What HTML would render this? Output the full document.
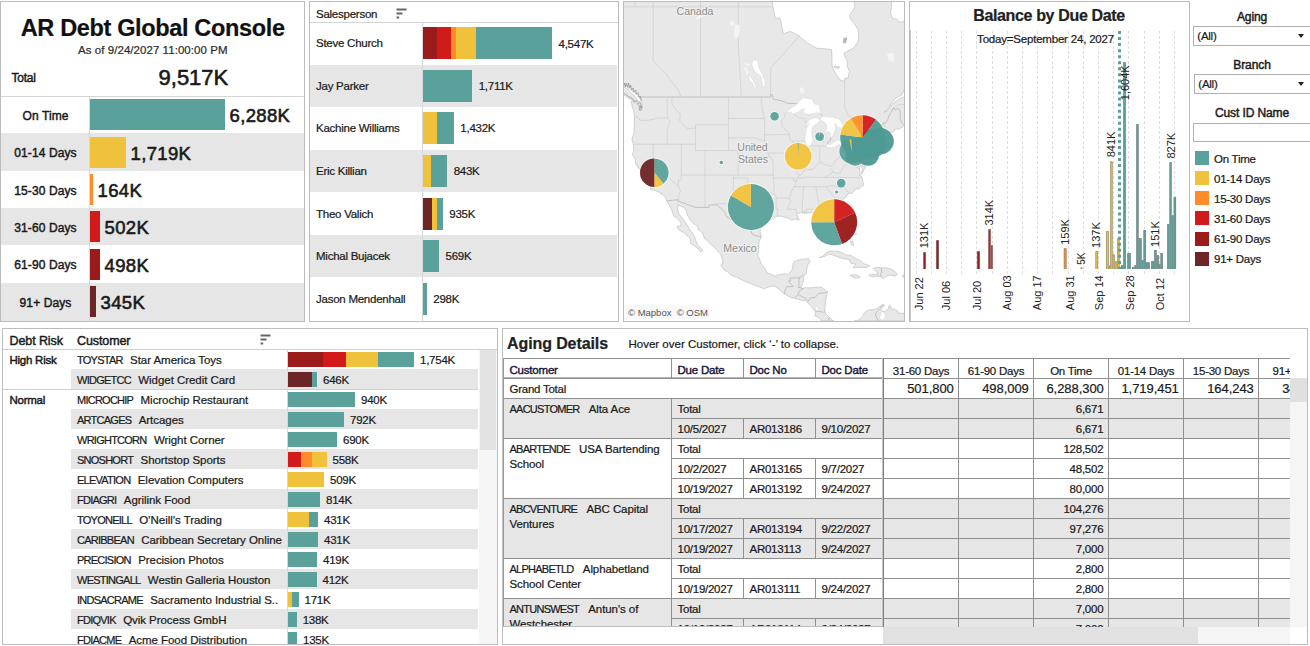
<!DOCTYPE html>
<html><head><meta charset="utf-8"><title>AR Debt Global Console</title>
<style>
html,body{margin:0;padding:0;background:#fff;}
body{width:1310px;height:646px;overflow:hidden;position:relative;font-family:"Liberation Sans",sans-serif;color:#1a1a1a;font-size:11.5px;}
.abs,.p,.t,.b,.ln{position:absolute;}
.p{box-sizing:border-box;border:1px solid #bcbcbc;background:#fff;overflow:hidden;}
.t{white-space:nowrap;line-height:1;letter-spacing:-0.25px;-webkit-text-stroke:0.22px #1a1a1a;}
.m{-webkit-text-stroke:0.45px #1a1a1a;}
.m2{-webkit-text-stroke:0.6px #1a1a1a;}
.id{letter-spacing:-0.75px;font-size:11px;}
.g{background:#e6e6e6;position:absolute;}
.b{height:31.5px;}
svg{position:absolute;left:0;top:0;overflow:hidden;}
</style></head><body>

<div class="p" style="left:0px;top:1px;width:305px;height:321px"></div>
<div class="t " style="left:152.7px;width:0;display:flex;justify-content:center;top:16.8px;font-size:23.5px;font-weight:bold;letter-spacing:-0.35px;color:#111;"><span>AR Debt Global Console</span></div>
<div class="t " style="left:152.8px;width:0;display:flex;justify-content:center;top:44.8px;font-size:11.5px;letter-spacing:0.05px;color:#333;"><span>As of 9/24/2027 11:00:00 PM</span></div>
<div class="t m" style="left:11.5px;top:72.0px;font-size:12px;">Total</div>
<div class="t m2" style="left:193.4px;width:0;display:flex;justify-content:center;top:66.5px;font-size:22px;letter-spacing:0;"><span>9,517K</span></div>
<div class="ln" style="left:1px;top:96px;width:303px;height:1px;background:#d4d4d4"></div>
<div class="t m" style="left:45.5px;width:0;display:flex;justify-content:center;top:110.0px;font-size:12px;letter-spacing:0.1px;"><span>On Time</span></div>
<div class="b" style="left:90px;top:99.0px;width:135.0px;height:31px;background:#5ba19b"></div>
<div class="t m2" style="left:229.5px;top:107.0px;font-size:18.5px;letter-spacing:0.35px;">6,288K</div>
<div class="g" style="left:1px;top:133.0px;width:303px;height:38.0px"></div>
<div class="t m" style="left:45.5px;width:0;display:flex;justify-content:center;top:147.0px;font-size:12px;letter-spacing:0.1px;"><span>01-14 Days</span></div>
<div class="b" style="left:90px;top:137.0px;width:36.0px;height:31px;background:#f0c23b"></div>
<div class="t m2" style="left:130.5px;top:145.1px;font-size:18.5px;letter-spacing:0.35px;">1,719K</div>
<div class="t m" style="left:45.5px;width:0;display:flex;justify-content:center;top:184.5px;font-size:12px;letter-spacing:0.1px;"><span>15-30 Days</span></div>
<div class="b" style="left:90px;top:174.0px;width:3.0px;height:31px;background:#ff8c28"></div>
<div class="t m2" style="left:97.5px;top:182.1px;font-size:18.5px;letter-spacing:0.35px;">164K</div>
<div class="g" style="left:1px;top:208.0px;width:303px;height:37.0px"></div>
<div class="t m" style="left:45.5px;width:0;display:flex;justify-content:center;top:221.5px;font-size:12px;letter-spacing:0.1px;"><span>31-60 Days</span></div>
<div class="b" style="left:90px;top:211.0px;width:10.0px;height:31px;background:#d21a1a"></div>
<div class="t m2" style="left:104.5px;top:219.1px;font-size:18.5px;letter-spacing:0.35px;">502K</div>
<div class="t m" style="left:45.5px;width:0;display:flex;justify-content:center;top:258.8px;font-size:12px;letter-spacing:0.1px;"><span>61-90 Days</span></div>
<div class="b" style="left:90px;top:249.0px;width:10.0px;height:31px;background:#9b1a1a"></div>
<div class="t m2" style="left:104.5px;top:257.1px;font-size:18.5px;letter-spacing:0.35px;">498K</div>
<div class="g" style="left:1px;top:282.5px;width:303px;height:38.5px"></div>
<div class="t m" style="left:45.5px;width:0;display:flex;justify-content:center;top:296.8px;font-size:12px;letter-spacing:0.1px;"><span>91+ Days</span></div>
<div class="b" style="left:90px;top:286.0px;width:6.0px;height:31px;background:#6e2528"></div>
<div class="t m2" style="left:100.5px;top:294.1px;font-size:18.5px;letter-spacing:0.35px;">345K</div>
<div class="ln" style="left:89px;top:97px;width:1px;height:224px;background:#d8d8d8"></div>
<div class="p" style="left:309px;top:1px;width:310px;height:321px"></div>
<div class="t " style="left:316.0px;top:9.2px;font-size:11.5px;">Salesperson</div>
<svg style="left:396px;top:8px" width="12" height="12"><path d="M0.5 1.5H10.5M0.5 5.5H6.5M0.5 9.5H3.2" stroke="#666" stroke-width="2" fill="none"/></svg>
<div class="ln" style="left:310px;top:22px;width:308px;height:1px;background:#d4d4d4"></div>
<div class="t " style="left:316.0px;top:38.1px;font-size:11.5px;">Steve Church</div>
<div class="b" style="left:423.0px;top:27.0px;width:14.0px;background:#9b1a1a"></div>
<div class="b" style="left:437.0px;top:27.0px;width:14.0px;background:#d21a1a"></div>
<div class="b" style="left:451.0px;top:27.0px;width:5.0px;background:#ff8c28"></div>
<div class="b" style="left:456.0px;top:27.0px;width:20.3px;background:#f0c23b"></div>
<div class="b" style="left:476.3px;top:27.0px;width:75.7px;background:#5ba19b"></div>
<div class="t " style="left:558.5px;top:38.5px;font-size:11.5px;">4,547K</div>
<div class="g" style="left:310px;top:65.0px;width:307px;height:42.3px"></div>
<div class="t " style="left:316.0px;top:80.8px;font-size:11.5px;">Jay Parker</div>
<div class="b" style="left:423.0px;top:70.2px;width:49.2px;background:#5ba19b"></div>
<div class="t " style="left:478.7px;top:81.2px;font-size:11.5px;">1,711K</div>
<div class="t " style="left:316.0px;top:123.3px;font-size:11.5px;">Kachine Williams</div>
<div class="b" style="left:423.0px;top:112.0px;width:14.0px;background:#f0c23b"></div>
<div class="b" style="left:437.0px;top:112.0px;width:16.8px;background:#5ba19b"></div>
<div class="t " style="left:460.3px;top:122.9px;font-size:11.5px;">1,432K</div>
<div class="g" style="left:310px;top:149.7px;width:307px;height:42.3px"></div>
<div class="t " style="left:316.0px;top:166.0px;font-size:11.5px;">Eric Killian</div>
<div class="b" style="left:423.0px;top:155.3px;width:7.8px;background:#f0c23b"></div>
<div class="b" style="left:430.8px;top:155.3px;width:16.4px;background:#5ba19b"></div>
<div class="t " style="left:453.7px;top:165.9px;font-size:11.5px;">843K</div>
<div class="t " style="left:316.0px;top:208.6px;font-size:11.5px;">Theo Valich</div>
<div class="b" style="left:423.0px;top:198.3px;width:9.0px;background:#6e2528"></div>
<div class="b" style="left:432.0px;top:198.3px;width:0.3px;background:#9b1a1a"></div>
<div class="b" style="left:432.3px;top:198.3px;width:4.7px;background:#f0c23b"></div>
<div class="b" style="left:437.0px;top:198.3px;width:5.8px;background:#5ba19b"></div>
<div class="t " style="left:449.3px;top:208.8px;font-size:11.5px;">935K</div>
<div class="g" style="left:310px;top:234.6px;width:307px;height:42.4px"></div>
<div class="t " style="left:316.0px;top:251.1px;font-size:11.5px;">Michal Bujacek</div>
<div class="b" style="left:423.0px;top:240.3px;width:16.0px;background:#5ba19b"></div>
<div class="t " style="left:445.5px;top:250.8px;font-size:11.5px;">569K</div>
<div class="t " style="left:316.0px;top:293.8px;font-size:11.5px;">Jason Mendenhall</div>
<div class="b" style="left:423.0px;top:283.2px;width:3.8px;background:#5ba19b"></div>
<div class="t " style="left:433.3px;top:294.2px;font-size:11.5px;">298K</div>
<div class="ln" style="left:422px;top:23px;width:1px;height:298px;background:#d8d8d8"></div>
<div class="p" style="left:623px;top:1px;width:282px;height:321px;background:#fff">
<svg width="280" height="319" viewBox="624 2 280 319" style="left:0;top:0">
<path d="M620.1 -2.9L772.4 -2.9L772.9 6.7L774.3 13.3L775.2 17.9L780.0 18.3L781.9 26.0L783.3 33.9L790.4 31.3L797.5 34.8L806.5 42.5L816.9 48.3L824.4 48.7L831.5 49.6L832.0 57.3L832.0 65.3L832.9 68.5L835.3 73.1L838.1 77.0L840.0 80.0L843.8 81.5L845.7 77.7L848.1 78.5L848.5 74.7L849.5 71.6L847.6 66.9L847.1 60.6L844.8 56.5L843.8 53.3L849.5 50.0L853.3 48.3L856.6 44.1L858.5 39.9L858.7 34.8L858.0 29.5L854.7 24.2L850.9 19.7L849.5 16.0L852.8 10.5L854.7 6.7L853.3 -2.9L891.6 -2.9L891.6 6.7L890.6 13.3L892.1 17.9L897.3 19.7L899.2 22.4L903.9 21.5L906.7 18.8L908.6 17.9L908.6 88.2L904.4 89.7L902.9 92.6L902.0 94.8L898.2 96.6L894.4 99.7L891.1 103.6L888.8 107.3L885.9 110.8L884.0 112.2L886.9 111.3L889.7 107.7L891.8 104.5L896.3 100.9L901.1 98.1L903.9 97.0L908.6 95.9L908.6 124.1L903.9 124.1L903.9 125.8L902.0 127.4L898.2 129.1L895.4 129.1L894.0 131.4L890.6 132.7L888.8 133.7L887.3 136.0L886.2 137.6L885.9 139.2L886.9 140.2L885.4 141.1L885.0 142.4L886.4 143.1L886.6 144.6L887.3 145.6L889.7 145.6L889.2 144.0L888.5 144.0L889.9 146.2L886.9 147.2L886.6 146.2L884.5 147.5L883.1 146.2L882.6 148.3L879.8 148.8L875.5 149.4L872.4 150.8L873.6 151.1L877.4 150.8L878.8 149.7L880.9 150.2L877.9 151.8L874.1 153.0L871.0 153.3L870.5 152.8L870.1 153.8L870.8 154.1L870.8 156.2L870.3 158.4L868.9 160.9L866.5 163.3L866.0 161.8L863.7 160.2L863.4 162.4L864.6 163.6L865.7 164.2L865.7 166.9L864.2 169.6L861.6 174.1L861.6 172.0L862.7 169.3L861.3 167.2L860.1 163.6L860.8 160.6L859.2 161.8L859.0 165.4L859.4 167.8L859.9 171.4L859.9 175.0L861.5 175.9L862.5 179.7L863.7 185.3L861.3 186.7L858.7 189.0L855.6 189.0L852.1 193.3L849.0 193.3L847.6 194.1L846.2 197.0L842.9 199.5L840.0 202.0L838.1 203.7L836.7 206.5L835.8 209.3L835.8 212.8L836.5 215.8L837.7 219.1L839.8 223.2L841.0 227.7L842.3 232.0L841.9 237.2L840.5 240.4L837.2 240.6L834.6 237.0L833.9 235.7L832.9 233.6L831.0 230.9L829.4 226.6L829.6 223.4L829.4 220.7L828.2 219.4L826.3 216.9L823.5 214.2L821.6 215.0L817.1 216.5L815.4 214.2L812.1 212.7L808.3 212.9L804.6 213.5L804.6 211.2L803.9 212.8L800.3 212.6L797.0 213.7L796.0 214.5L797.9 215.8L797.5 218.3L799.4 219.4L797.9 220.5L795.6 218.8L794.2 219.6L791.3 219.9L789.0 218.6L786.6 217.5L784.2 217.2L780.0 216.0L776.9 216.4L772.9 218.3L772.4 218.6L770.5 220.5L764.8 223.4L762.0 226.1L760.3 229.3L760.1 232.0L761.3 236.5L759.2 241.4L758.4 246.6L758.4 251.8L758.0 255.6L760.1 260.5L761.0 263.5L764.4 267.5L766.2 271.1L767.7 273.1L771.5 274.3L774.3 276.3L778.5 274.9L782.6 274.1L785.6 273.7L788.0 274.8L790.4 272.1L791.8 270.1L792.7 267.8L793.0 264.0L793.7 262.0L796.5 260.5L801.7 259.2L804.6 258.9L808.8 258.9L810.2 261.5L807.4 265.5L806.9 269.6L806.0 274.1L804.6 274.6L803.6 277.0L803.6 279.5L803.1 282.5L801.7 285.5L800.3 287.4L801.7 288.2L803.6 288.4L805.0 287.6L807.9 287.8L810.2 287.9L814.0 287.2L818.8 287.0L822.1 287.7L825.4 290.4L827.5 291.8L826.3 296.7L825.6 301.6L824.9 306.4L824.9 311.7L826.3 314.2L828.2 316.1L830.1 318.0L832.0 319.9L833.9 320.9L821.1 320.9L820.2 318.0L818.3 317.8L817.3 316.6L815.0 316.1L815.4 311.7L811.2 306.4L806.9 302.1L807.4 300.1L804.6 300.9L797.5 299.2L790.4 297.2L784.7 294.3L778.5 288.9L774.8 286.2L770.5 286.2L764.4 288.7L761.5 287.7L754.9 285.5L748.3 282.7L743.1 280.5L737.4 277.5L731.2 275.3L727.5 271.8L724.1 270.1L720.8 265.0L722.7 263.8L722.7 259.5L720.8 254.4L717.5 250.8L713.7 246.6L710.4 244.0L707.1 240.4L704.3 238.3L703.3 234.6L701.0 231.4L698.1 229.3L697.7 226.1L693.9 224.0L690.6 220.7L688.2 216.4L686.3 210.9L684.9 207.9L681.6 206.5L677.8 204.8L677.8 209.3L678.7 213.7L683.5 219.6L686.8 224.5L689.6 229.3L691.5 232.0L694.4 236.2L696.2 241.4L697.7 245.1L702.9 250.2L701.0 252.3L699.1 249.7L693.4 245.1L690.6 243.5L690.1 238.8L686.8 235.1L683.5 232.5L679.7 230.4L676.9 226.6L681.1 225.6L680.6 222.3L677.3 218.6L673.5 215.8L672.1 210.9L669.3 205.4L666.9 200.9L666.0 198.1L663.1 194.7L660.8 193.9L660.3 192.4L657.0 191.6L654.6 190.1L650.8 189.9L650.1 185.8L647.1 182.6L644.2 177.4L641.8 173.8L641.4 170.2L639.0 169.0L635.7 163.6L635.2 158.7L632.4 154.4L633.8 150.6L633.3 144.3L631.9 139.2L633.8 133.4L634.3 126.1L634.5 116.6L634.0 113.2L631.0 101.4L636.9 103.1L640.2 103.1L640.9 107.0L639.5 110.4L642.1 109.1L642.1 104.8L641.4 101.3L641.4 98.8L638.5 97.0L638.1 94.8L636.6 94.1L634.8 93.0L631.7 90.5L629.1 88.2L626.7 86.4L622.9 85.3L620.1 84.9Z M620.1 94.1L622.9 94.5L625.3 95.9L626.9 97.4L628.6 98.4L632.4 100.2L637.1 101.7L637.1 99.5L634.5 95.8L632.9 94.8L630.0 92.1L628.4 89.5L625.3 87.5L622.9 86.6L620.1 86.4Z M819.2 257.7L822.1 256.9L826.8 252.3L831.0 251.0L836.7 251.3L840.0 251.8L845.7 254.9L850.9 255.4L855.6 258.4L861.3 261.2L863.2 263.5L869.8 265.8L866.0 267.5L860.4 267.3L853.3 267.8L855.6 264.0L850.9 263.5L849.0 259.5L842.4 258.4L836.7 256.4L832.5 254.9L828.7 254.1L825.4 256.1Z M868.7 275.3L871.7 274.3L877.9 274.8L876.7 271.6L873.6 268.5L876.5 267.3L881.7 267.8L885.9 267.8L890.2 268.8L893.5 270.6L897.3 273.8L895.8 276.0L889.7 275.1L886.9 276.0L883.1 279.0L881.2 276.3L876.5 276.3L870.8 276.8Z M850.2 275.3L854.2 274.6L859.9 276.3L859.9 277.5L855.6 278.3L850.9 276.0Z M902.9 274.8L908.6 274.8L908.6 275.6L908.6 277.0L902.9 277.2Z M854.2 320.9L857.1 320.9L860.4 318.5L862.7 316.1L863.7 313.7L866.8 311.0L869.8 309.8L874.6 309.6L879.3 306.9L883.3 304.3L884.5 306.0L880.7 308.4L882.1 311.5L885.0 311.3L888.3 308.9L888.8 306.0L890.6 305.5L891.1 308.9L894.4 309.1L897.7 310.8L898.2 313.2L903.9 313.2L908.6 313.2L908.6 320.9Z M850.4 240.9L852.8 241.4L853.8 245.6L850.9 244.6Z M852.3 232.5L856.6 233.3L856.1 234.6L851.9 233.6Z M833.9 66.1L839.6 66.9L838.6 68.5L834.4 67.7Z" fill="#e8e8e8" stroke="#b9b9b9" stroke-width="0.6"/>
<path d="M634.8 116.3L638.1 117.0L640.0 120.4L647.5 120.4L656.5 118.5L657.9 118.0L667.8 118.0 M667.2 97.0L667.2 115.3L667.8 118.0L669.8 121.4L667.4 129.4L667.2 132.7L667.2 144.3 M633.3 144.3L695.5 144.3 M653.2 144.3L653.2 163.0L678.6 186.7 M681.4 144.3L681.4 175.0L681.3 179.7L678.3 180.3L678.6 186.7L680.6 191.0L678.3 195.8L679.2 198.1L678.2 199.7 M681.4 175.0L773.2 175.0 M671.9 97.0L671.9 104.1L676.9 111.1L680.2 113.6L679.7 121.1L684.2 125.4L687.3 128.8L695.5 128.1 M695.5 124.8L695.5 150.6 M695.5 124.8L728.6 124.8 M728.6 97.0L728.6 150.6 M695.5 150.6L738.1 150.6 M705.0 150.6L705.0 207.4 M728.6 118.4L764.1 118.4 M728.6 137.9L754.9 137.9L757.7 138.9L764.6 141.1 M738.1 150.6L738.1 175.0 M738.1 156.9L770.0 156.9 M733.4 175.0L733.4 203.7L716.6 203.7 M733.4 178.0L747.8 178.0L747.8 189.2L751.6 190.4L756.8 191.6L761.0 193.9L766.7 193.3L771.5 193.0L773.9 194.5 M760.9 97.0L761.5 104.1L762.7 111.1L763.9 116.0L764.1 118.4L764.6 122.7L764.6 134.7L764.6 141.1L766.2 147.5L767.4 153.1L770.0 156.9L771.9 158.4L773.2 162.4L773.2 178.0L774.1 184.4L773.9 194.5L776.0 195.0L776.0 209.3L778.3 209.3L777.4 213.1L776.9 216.4 M764.6 134.7L789.3 134.7 M767.8 153.1L786.9 153.1L788.4 154.5 M773.2 178.0L794.4 178.0L793.4 180.9L796.5 180.9 M776.0 198.1L789.6 198.1 M785.2 113.2L784.2 117.3L781.4 120.7L782.1 126.4L789.0 132.7L789.4 134.7L789.9 139.8L792.0 141.1L794.4 145.6L790.1 149.4L789.9 152.5L788.4 154.5L788.0 157.5L791.8 163.0L794.2 164.2L794.2 165.2L797.5 173.2L799.1 175.0L797.5 178.0L796.5 180.9L794.9 185.8L792.3 189.6L789.4 198.1L790.8 201.8L788.5 206.2L787.5 209.3L796.4 209.3L796.0 211.5L797.0 213.7 M792.0 141.1L805.5 141.1 M793.2 114.2L799.8 118.0L804.1 118.7L805.5 122.4L806.5 124.1 M806.8 145.9L806.8 160.9L806.5 164.8L804.3 170.2 M819.7 146.2L819.7 162.4 M808.3 145.9L819.7 145.9L826.1 146.1 M839.9 142.4L839.9 152.9L839.6 156.9L838.4 158.7L835.5 160.6L834.1 163.0L832.0 165.4L830.1 166.6L828.2 164.8L824.9 165.1L821.1 162.4L819.7 162.4L816.9 164.8L815.2 167.4L811.7 169.6L806.7 169.3L804.3 170.2L801.7 174.4L799.1 175.0 M797.5 178.0L804.3 178.0L804.3 177.1L825.0 177.4L834.5 177.4L861.8 177.7 M793.7 186.7L827.7 186.7L831.0 185.5L837.4 186.4L838.6 187.7L844.0 187.8L849.3 193.2 M803.6 186.7L802.3 204.3L802.7 213.4 M815.9 186.7L817.9 198.8L818.8 202.0L818.5 206.5L818.8 209.3L819.4 210.9L832.0 211.6L832.9 212.6L835.5 210.9 M806.5 209.3L818.8 209.3 M806.5 209.3L806.9 213.1 M827.7 186.7L826.6 188.4L828.7 189.9L832.0 194.1L833.2 195.6L835.8 199.0L838.1 203.4 M830.1 168.0L832.9 171.7L833.1 171.9L829.6 174.4L825.0 177.4 M833.1 171.9L836.7 173.5L841.0 172.0L844.1 165.7L847.8 164.2L850.2 160.2L853.2 161.0L854.2 162.4L856.1 163.6L855.2 166.6L857.1 167.5L859.9 169.3 M839.9 158.6L862.3 158.6L863.2 157.9L864.2 158.1 M844.9 158.6L844.9 161.8L850.2 160.2 M862.3 158.6L862.7 166.3L865.8 166.3 M843.5 142.7L843.5 144.3L864.4 144.3L867.5 148.4L865.6 151.6L865.1 153.1L867.2 155.6L865.3 157.5L863.4 159.3 M867.5 148.4L871.3 150.6 M872.4 150.6L873.1 144.0L874.3 139.5L873.9 134.0L873.9 124.8 M873.1 144.1L881.2 144.2L883.2 144.2L884.0 147.5 M881.2 144.3L881.2 148.6 M874.3 139.7L883.6 139.8L885.7 138.8 M878.1 139.7L878.3 134.7L880.0 131.4L882.4 127.8L882.6 124.8 M886.3 137.5L885.1 135.3L884.7 122.7 M620.1 6.7L772.4 6.7 M634.3 -2.9L635.2 6.7 M653.2 -2.9L653.2 60.6L660.3 68.5L666.0 73.5L669.8 79.3L674.5 85.3L678.3 90.5L681.2 97.0 M700.5 -2.9L700.5 97.0 M738.3 -2.9L738.3 44.1L741.4 97.0 M770.7 94.2L770.7 68.1L800.1 35.2 M844.7 78.7L844.7 107.3L847.1 112.2L848.5 116.0L856.1 119.0L862.7 122.1L868.9 121.1L869.1 123.4L867.5 124.8 M894.2 108.1L897.3 104.8L901.1 104.5L908.6 104.8" fill="none" stroke="#c6c6c6" stroke-width="0.55"/>
<path d="M637.6 97.0L770.7 97.0L770.7 94.2L772.4 94.8L773.3 99.2L778.5 100.2L783.3 101.3L788.5 103.6L795.1 103.4L797.0 104.1 M797.0 104.1L802.7 102.0L809.3 107.0L819.7 111.8L821.1 114.6L824.0 117.3L825.8 119.4L830.6 122.7L832.5 134.0L830.8 137.9L830.6 140.5L827.7 142.4L827.7 144.3L831.0 146.2L837.7 143.1L847.1 139.2L846.9 136.6L846.2 135.0L848.5 133.8L857.5 133.8L859.9 130.1 M859.9 130.1L864.6 125.8L867.5 124.8L882.6 124.8L883.1 123.1L885.7 122.7L887.8 119.7L888.5 117.0L889.5 115.3L893.2 108.0L894.2 108.1L894.9 109.9L897.7 108.7L900.1 110.7L900.2 118.7L901.8 122.7L903.4 124.1 M666.8 200.8L678.2 199.7L677.8 200.9L695.4 207.4L709.0 207.4L709.0 204.9L717.1 204.9L724.1 211.2L727.0 217.2L732.9 220.4L735.0 216.4L741.2 216.0L743.5 218.3L745.4 221.8L750.2 228.2L752.1 234.1L756.3 235.9L761.3 236.5 M784.7 294.0L784.7 291.4L786.8 286.7L793.0 286.6L788.5 280.8L790.4 280.8L790.4 277.9L799.1 277.9L800.8 277.0L803.1 274.6 M799.1 277.9L798.8 287.4L800.3 287.4 M798.8 287.4L803.1 288.7 M798.2 294.5L799.1 291.4L803.1 288.7 M794.6 297.9L798.2 294.5L802.2 296.7L805.7 297.9L806.0 299.7 M807.9 301.6L810.5 297.9L815.0 297.5L818.8 293.3L823.5 293.1L827.5 291.8 M815.4 310.8L819.2 311.5L823.5 312.2L825.1 311.7 M828.7 320.4L828.9 318.0L830.1 318.0 M883.3 304.3L880.2 308.4L877.9 310.8L875.5 313.7L876.0 316.6L878.3 320.9 M881.4 268.3L881.7 273.1L880.2 274.1L881.4 276.8" fill="none" stroke="#b0b0b0" stroke-width="0.7"/>
<path d="M785.2 112.9L790.4 108.4L797.0 104.1L798.9 101.3L803.1 97.7L809.3 98.8L812.1 99.2L814.5 104.1L819.2 104.8L820.2 111.1L821.1 114.6L818.8 112.9L814.0 113.4L807.4 114.6L802.7 112.2L805.0 108.0L800.3 110.4L798.4 112.0L793.2 113.9L790.8 111.5L789.4 112.2Z M819.9 119.2L816.4 117.7L812.8 118.4L809.1 119.7L806.5 124.1L804.6 127.8L806.9 125.4L809.5 122.7L806.9 128.1L806.0 130.7L805.0 137.6L805.5 142.4L806.5 145.3L807.9 146.7L809.8 146.1L811.7 143.7L813.1 140.5L812.4 136.6L811.7 131.7L812.8 126.8L815.7 124.8L816.4 126.1L817.1 123.1L819.0 122.1Z M820.2 118.7L822.5 116.3L828.2 116.8L832.9 117.0L835.3 118.2L838.1 118.5L841.9 122.4L842.9 126.1L841.5 128.1L837.9 127.4L836.3 124.8L834.6 123.1L835.8 128.1L834.1 133.0L832.9 136.3L830.8 137.9L829.9 132.4L828.2 131.1L826.1 133.0L824.0 133.7L825.8 130.7L826.8 128.8L826.3 124.4L824.4 122.1L821.4 120.4Z M826.1 146.2L827.5 144.0L830.6 144.6L833.4 142.4L836.7 140.2L841.9 140.8L845.9 138.8L847.6 138.7L845.5 141.1L841.9 143.4L838.6 145.0L834.4 147.5L829.6 147.8Z M843.3 136.0L845.2 133.8L847.8 132.2L851.2 131.7L856.1 132.0L859.0 130.1L860.4 132.0L860.4 134.3L859.0 134.9L853.8 136.2L849.5 135.5L846.9 136.2Z M753.0 59.8L757.7 60.6L758.7 66.9L762.5 74.7L765.3 82.3L765.1 86.8L762.5 86.8L762.0 82.3L760.6 76.2L755.4 72.4L753.0 67.7L751.6 64.5Z M748.7 75.4L751.1 77.0L754.4 83.0L756.8 88.2L754.9 88.2L752.5 83.0L749.2 80.0Z M873.6 124.8L874.6 124.8L874.3 129.4L873.6 133.4Z M837.2 229.8L839.3 230.1L839.3 232.2L837.4 232.2Z M814.5 306.0L817.3 306.9L819.5 310.8L816.4 310.3Z M882.1 311.5L885.0 313.2L885.0 318.0L882.1 320.4L879.8 318.0L880.7 313.7Z" fill="#ffffff" stroke="#d0d0d0" stroke-width="0.4"/>
<path d="M799.8 87.5L803.1 87.5L804.6 91.9L802.2 94.1L799.8 91.9Z M735.5 24.2L739.8 25.1L739.8 31.3L737.9 38.2L734.6 39.1L734.1 32.1Z M694.4 18.8L700.5 15.1L707.6 12.3L716.6 13.3L710.0 14.7L702.9 16.5L697.7 19.7Z M730.8 20.6L734.1 21.5L733.6 26.0L730.8 25.1Z M745.0 62.2L749.7 64.5L749.2 66.5L745.0 64.5Z M743.5 66.1L746.9 67.7L748.7 73.1L747.3 75.4L745.4 71.6Z M886.9 54.1L892.5 52.5L894.9 57.3L893.0 62.2L888.8 60.6Z" fill="#f4f4f4"/>
<path d="M623.9 86.5L624.9 83.0L625.6 86.8L626.7 83.4L627.7 87.2L628.6 83.0L629.8 87.9L630.6 85.1L631.8 90.0L633.2 87.9L633.9 92.1L635.6 90.0L636.4 94.1L638.1 92.8L638.8 96.5L640.6 96.5L640.9 100.4L639.5 101.8L641.2 104.3L640.2 108.1L642.0 106.0L640.9 110.2L639.2 109.5L639.5 106.0L637.8 104.3L638.4 101.8L636.4 100.4L633.9 101.8L633.2 99.0L631.1 97.6L628.4 96.5L626.3 94.8L624.2 93.4" fill="none" stroke="#8e8e8e" stroke-width="0.7" stroke-linejoin="round"/>
<path d="M843.3 38.2L847.1 37.3L846.2 43.3L842.9 43.3Z" fill="#b8b8b8"/>
<text x="695.0" y="15.0" font-family="Liberation Sans, sans-serif" font-size="10.5" fill="#8c8c8c" text-anchor="middle" stroke="#f0f0f0" stroke-width="2" paint-order="stroke" stroke-linejoin="round">Canada</text>
<text x="752.5" y="151.0" font-family="Liberation Sans, sans-serif" font-size="10.5" fill="#8c8c8c" text-anchor="middle" stroke="#f0f0f0" stroke-width="2" paint-order="stroke" stroke-linejoin="round">United</text>
<text x="753.0" y="163.0" font-family="Liberation Sans, sans-serif" font-size="10.5" fill="#8c8c8c" text-anchor="middle" stroke="#f0f0f0" stroke-width="2" paint-order="stroke" stroke-linejoin="round">States</text>
<text x="740.0" y="251.5" font-family="Liberation Sans, sans-serif" font-size="10.5" fill="#8c8c8c" text-anchor="middle" stroke="#f0f0f0" stroke-width="2" paint-order="stroke" stroke-linejoin="round">Mexico</text>
<circle cx="654.3" cy="172.7" r="15.3" fill="#ffffff" fill-opacity="0.55"/>
<path d="M654.30 172.70L654.30 158.40A14.30 14.30 0 0 1 663.49 183.65Z" fill="#5ba19b" fill-opacity="0.96"/>
<path d="M654.30 172.70L663.49 183.65A14.30 14.30 0 0 1 654.30 187.00Z" fill="#f0c23b" fill-opacity="0.96"/>
<path d="M654.30 172.70L654.30 187.00A14.30 14.30 0 0 1 654.30 158.40Z" fill="#6e2528" fill-opacity="0.96"/>
<circle cx="721.3" cy="162.5" r="2.8" fill="#ffffff" fill-opacity="0.55"/>
<circle cx="721.3" cy="162.5" r="1.8" fill="#5ba19b" fill-opacity="0.96"/>
<circle cx="750.9" cy="207.0" r="24.0" fill="#ffffff" fill-opacity="0.55"/>
<path d="M750.90 207.00L750.90 184.00A23.00 23.00 0 1 1 730.98 195.50Z" fill="#5ba19b" fill-opacity="0.96"/>
<path d="M750.90 207.00L730.98 195.50A23.00 23.00 0 0 1 750.90 184.00Z" fill="#f0c23b" fill-opacity="0.96"/>
<circle cx="834.2" cy="222.3" r="24.0" fill="#ffffff" fill-opacity="0.55"/>
<path d="M834.20 222.30L834.20 199.30A23.00 23.00 0 0 1 855.05 212.58Z" fill="#d21a1a" fill-opacity="0.96"/>
<path d="M834.20 222.30L855.05 212.58A23.00 23.00 0 0 1 842.07 243.91Z" fill="#9b1a1a" fill-opacity="0.96"/>
<path d="M834.20 222.30L842.07 243.91A23.00 23.00 0 0 1 811.20 222.30Z" fill="#5ba19b" fill-opacity="0.96"/>
<path d="M834.20 222.30L811.20 222.30A23.00 23.00 0 0 1 834.20 199.30Z" fill="#f0c23b" fill-opacity="0.96"/>
<circle cx="798.1" cy="156.3" r="14.3" fill="#ffffff" fill-opacity="0.55"/>
<path d="M798.10 156.30L798.10 143.00A13.30 13.30 0 1 1 797.64 143.01Z" fill="#f0c23b" fill-opacity="0.96"/>
<path d="M798.10 156.30L797.64 143.01A13.30 13.30 0 0 1 798.56 143.01Z" fill="#5ba19b" fill-opacity="0.96"/>
<circle cx="774.6" cy="116.3" r="5.3" fill="#ffffff" fill-opacity="0.55"/>
<circle cx="774.6" cy="116.3" r="4.3" fill="#5ba19b" fill-opacity="0.96"/>
<circle cx="819.6" cy="136.7" r="5.4" fill="#ffffff" fill-opacity="0.55"/>
<path d="M819.60 136.70L819.60 132.30A4.40 4.40 0 1 1 818.84 132.37Z" fill="#5ba19b" fill-opacity="0.96"/>
<path d="M819.60 136.70L818.84 132.37A4.40 4.40 0 0 1 819.60 132.30Z" fill="#f0c23b" fill-opacity="0.96"/>
<circle cx="841.2" cy="183.1" r="5.3" fill="#ffffff" fill-opacity="0.55"/>
<circle cx="841.2" cy="183.1" r="4.3" fill="#5ba19b" fill-opacity="0.96"/>
<circle cx="836.6" cy="191.9" r="2.5" fill="#ffffff" fill-opacity="0.55"/>
<circle cx="836.6" cy="191.9" r="1.5" fill="#5ba19b" fill-opacity="0.96"/>
<circle cx="879.9" cy="141.0" r="14.3" fill="#ffffff" fill-opacity="0.55"/>
<circle cx="872.2" cy="143.5" r="15.5" fill="#ffffff" fill-opacity="0.55"/>
<circle cx="867.9" cy="154.6" r="12.0" fill="#ffffff" fill-opacity="0.55"/>
<circle cx="851.8" cy="151.2" r="13.3" fill="#ffffff" fill-opacity="0.55"/>
<circle cx="859.0" cy="148.0" r="12.0" fill="#ffffff" fill-opacity="0.55"/>
<circle cx="855.0" cy="156.3" r="10.4" fill="#ffffff" fill-opacity="0.55"/>
<circle cx="862.6" cy="137.6" r="23.4" fill="#ffffff" fill-opacity="0.55"/>
<circle cx="879.9" cy="141.0" r="13.3" fill="#4f9a94" fill-opacity="0.88"/>
<circle cx="872.2" cy="143.5" r="14.5" fill="#4f9a94" fill-opacity="0.88"/>
<circle cx="867.9" cy="154.6" r="11.0" fill="#4f9a94" fill-opacity="0.88"/>
<circle cx="851.8" cy="151.2" r="12.3" fill="#4f9a94" fill-opacity="0.88"/>
<circle cx="859.0" cy="148.0" r="11.0" fill="#4f9a94" fill-opacity="0.88"/>
<circle cx="855.0" cy="156.3" r="9.4" fill="#4f9a94" fill-opacity="0.88"/>
<path d="M862.60 137.60L862.60 115.20A22.40 22.40 0 0 1 876.08 119.71Z" fill="#d21a1a" fill-opacity="0.95"/>
<path d="M862.60 137.60L876.08 119.71A22.40 22.40 0 1 1 840.42 134.48Z" fill="#4f9a94" fill-opacity="0.95"/>
<path d="M862.60 137.60L840.42 134.48A22.40 22.40 0 0 1 850.73 118.60Z" fill="#f0c23b" fill-opacity="0.95"/>
<path d="M862.60 137.60L850.73 118.60A22.40 22.40 0 0 1 862.60 115.20Z" fill="#ff8c28" fill-opacity="0.95"/>
<circle cx="881.5" cy="141.5" r="12.5" fill="#4f9a94" fill-opacity="0.7"/>
<circle cx="868.5" cy="155.0" r="10.5" fill="#4f9a94" fill-opacity="0.7"/>
<path d="M849.3 139.4L851.4 139.2L851.9 152Z" fill="#f0c23b"/>
</svg>
<div class="abs" style="left:2px;top:303px;width:83px;height:14px;background:rgba(247,247,247,0.9)"></div>
<div class="t" style="left:4px;top:306px;font-size:9.5px;color:#555;letter-spacing:0;-webkit-text-stroke:0">© Mapbox &nbsp;© OSM</div>
</div>
<div class="p" style="left:909px;top:1px;width:281px;height:321px"></div>
<div class="t " style="left:1049.0px;width:0;display:flex;justify-content:center;top:7.7px;font-size:16px;font-weight:bold;letter-spacing:-0.35px;color:#222;"><span>Balance by Due Date</span></div>
<svg width="1310" height="330" style="left:0;top:0;pointer-events:none">
<path d="M910.5 30V321" stroke="#c8c8c8" stroke-width="1"/>
<path d="M916.5 31V274" stroke="#dedede" stroke-width="1" stroke-dasharray="3 2"/>
<path d="M931.5 31V274" stroke="#dedede" stroke-width="1" stroke-dasharray="3 2"/>
<path d="M946.5 31V274" stroke="#dedede" stroke-width="1" stroke-dasharray="3 2"/>
<path d="M961.5 31V274" stroke="#dedede" stroke-width="1" stroke-dasharray="3 2"/>
<path d="M976.5 31V274" stroke="#dedede" stroke-width="1" stroke-dasharray="3 2"/>
<path d="M992.5 31V274" stroke="#dedede" stroke-width="1" stroke-dasharray="3 2"/>
<path d="M1007.5 31V274" stroke="#dedede" stroke-width="1" stroke-dasharray="3 2"/>
<path d="M1022.5 31V274" stroke="#dedede" stroke-width="1" stroke-dasharray="3 2"/>
<path d="M1037.5 31V274" stroke="#dedede" stroke-width="1" stroke-dasharray="3 2"/>
<path d="M1052.5 31V274" stroke="#dedede" stroke-width="1" stroke-dasharray="3 2"/>
<path d="M1068.5 31V274" stroke="#dedede" stroke-width="1" stroke-dasharray="3 2"/>
<path d="M1083.5 31V274" stroke="#dedede" stroke-width="1" stroke-dasharray="3 2"/>
<path d="M1098.5 31V274" stroke="#dedede" stroke-width="1" stroke-dasharray="3 2"/>
<path d="M1113.5 31V274" stroke="#dedede" stroke-width="1" stroke-dasharray="3 2"/>
<path d="M1128.5 31V274" stroke="#dedede" stroke-width="1" stroke-dasharray="3 2"/>
<path d="M1144.5 31V274" stroke="#dedede" stroke-width="1" stroke-dasharray="3 2"/>
<path d="M1159.5 31V274" stroke="#dedede" stroke-width="1" stroke-dasharray="3 2"/>
<path d="M1174.5 31V274" stroke="#dedede" stroke-width="1" stroke-dasharray="3 2"/>
<path d="M918 270H1189" stroke="#e4e4e4" stroke-width="1" stroke-dasharray="1 14.2"/>
<rect x="923.3" y="252.2" width="2.6" height="16.8" fill="#9b1a1a"/>
<path d="M923.60 269.0V252.5H925.60V269.0" fill="none" stroke="#868686" stroke-width="0.7" stroke-opacity="0.9"/>
<rect x="936.1" y="240.2" width="2.8" height="28.8" fill="#9b1a1a"/>
<path d="M936.40 269.0V240.5H938.60V269.0" fill="none" stroke="#868686" stroke-width="0.7" stroke-opacity="0.9"/>
<rect x="977.0" y="251.3" width="2.9" height="17.7" fill="#9b1a1a"/>
<path d="M977.30 269.0V251.6H979.60V269.0" fill="none" stroke="#868686" stroke-width="0.7" stroke-opacity="0.9"/>
<rect x="988.3" y="229.2" width="2.5" height="39.8" fill="#d21a1a"/>
<path d="M988.60 269.0V229.5H990.50V269.0" fill="none" stroke="#868686" stroke-width="0.7" stroke-opacity="0.9"/>
<rect x="990.8" y="245.3" width="2.0" height="23.7" fill="#d21a1a"/>
<path d="M991.10 269.0V245.6H992.50V269.0" fill="none" stroke="#868686" stroke-width="0.7" stroke-opacity="0.9"/>
<rect x="1063.9" y="248.3" width="2.6" height="20.7" fill="#ff8c28"/>
<path d="M1064.20 269.0V248.6H1066.20V269.0" fill="none" stroke="#868686" stroke-width="0.7" stroke-opacity="0.9"/>
<rect x="1080.7" y="267.5" width="1.6" height="1.5" fill="#f0c23b"/>
<path d="M1081.00 269.0V267.8H1082.00V269.0" fill="none" stroke="#868686" stroke-width="0.7" stroke-opacity="0.9"/>
<rect x="1095.5" y="251.2" width="2.5" height="17.8" fill="#f0c23b"/>
<path d="M1095.80 269.0V251.5H1097.70V269.0" fill="none" stroke="#868686" stroke-width="0.7" stroke-opacity="0.9"/>
<rect x="1106.1" y="231.2" width="2.6" height="37.8" fill="#f0c23b"/>
<path d="M1106.40 269.0V231.5H1108.40V269.0" fill="none" stroke="#868686" stroke-width="0.7" stroke-opacity="0.9"/>
<rect x="1108.7" y="265.6" width="1.6" height="3.4" fill="#f0c23b"/>
<path d="M1109.00 269.0V265.9H1110.00V269.0" fill="none" stroke="#868686" stroke-width="0.7" stroke-opacity="0.9"/>
<rect x="1110.3" y="161.4" width="2.3" height="107.6" fill="#f0c23b"/>
<path d="M1110.60 269.0V161.7H1112.30V269.0" fill="none" stroke="#868686" stroke-width="0.7" stroke-opacity="0.9"/>
<rect x="1112.6" y="254.5" width="2.1" height="14.5" fill="#f0c23b"/>
<path d="M1112.90 269.0V254.8H1114.40V269.0" fill="none" stroke="#868686" stroke-width="0.7" stroke-opacity="0.9"/>
<rect x="1114.7" y="261.4" width="2.6" height="7.6" fill="#f0c23b"/>
<path d="M1115.00 269.0V261.7H1117.00V269.0" fill="none" stroke="#868686" stroke-width="0.7" stroke-opacity="0.9"/>
<rect x="1117.3" y="238.2" width="2.3" height="30.8" fill="#f0c23b"/>
<path d="M1117.60 269.0V238.5H1119.30V269.0" fill="none" stroke="#868686" stroke-width="0.7" stroke-opacity="0.9"/>
<rect x="1121.0" y="265.1" width="2.3" height="3.9" fill="#5ba19b"/>
<path d="M1121.30 269.0V265.4H1123.00V269.0" fill="none" stroke="#868686" stroke-width="0.7" stroke-opacity="0.9"/>
<rect x="1123.3" y="62.2" width="2.5" height="206.8" fill="#5ba19b"/>
<path d="M1123.60 269.0V62.5H1125.50V269.0" fill="none" stroke="#868686" stroke-width="0.7" stroke-opacity="0.9"/>
<rect x="1127.3" y="253.1" width="3.4" height="15.9" fill="#5ba19b"/>
<path d="M1127.60 269.0V253.4H1130.40V269.0" fill="none" stroke="#868686" stroke-width="0.7" stroke-opacity="0.9"/>
<rect x="1132.1" y="267.0" width="2.4" height="2.0" fill="#5ba19b"/>
<path d="M1132.40 269.0V267.3H1134.20V269.0" fill="none" stroke="#868686" stroke-width="0.7" stroke-opacity="0.9"/>
<rect x="1134.5" y="265.1" width="1.8" height="3.9" fill="#5ba19b"/>
<path d="M1134.80 269.0V265.4H1136.00V269.0" fill="none" stroke="#868686" stroke-width="0.7" stroke-opacity="0.9"/>
<rect x="1136.3" y="124.2" width="2.3" height="144.8" fill="#5ba19b"/>
<path d="M1136.60 269.0V124.5H1138.30V269.0" fill="none" stroke="#868686" stroke-width="0.7" stroke-opacity="0.9"/>
<rect x="1138.6" y="238.2" width="3.0" height="30.8" fill="#5ba19b"/>
<path d="M1138.90 269.0V238.5H1141.30V269.0" fill="none" stroke="#868686" stroke-width="0.7" stroke-opacity="0.9"/>
<rect x="1141.6" y="260.0" width="1.9" height="9.0" fill="#5ba19b"/>
<path d="M1141.90 269.0V260.3H1143.20V269.0" fill="none" stroke="#868686" stroke-width="0.7" stroke-opacity="0.9"/>
<rect x="1143.5" y="230.0" width="2.4" height="39.0" fill="#5ba19b"/>
<path d="M1143.80 269.0V230.3H1145.60V269.0" fill="none" stroke="#868686" stroke-width="0.7" stroke-opacity="0.9"/>
<rect x="1145.9" y="262.4" width="2.0" height="6.6" fill="#5ba19b"/>
<path d="M1146.20 269.0V262.7H1147.60V269.0" fill="none" stroke="#868686" stroke-width="0.7" stroke-opacity="0.9"/>
<rect x="1147.9" y="262.4" width="1.9" height="6.6" fill="#5ba19b"/>
<path d="M1148.20 269.0V262.7H1149.50V269.0" fill="none" stroke="#868686" stroke-width="0.7" stroke-opacity="0.9"/>
<rect x="1151.2" y="261.1" width="3.0" height="7.9" fill="#5ba19b"/>
<path d="M1151.50 269.0V261.4H1153.90V269.0" fill="none" stroke="#868686" stroke-width="0.7" stroke-opacity="0.9"/>
<rect x="1154.2" y="250.1" width="2.5" height="18.9" fill="#5ba19b"/>
<path d="M1154.50 269.0V250.4H1156.40V269.0" fill="none" stroke="#868686" stroke-width="0.7" stroke-opacity="0.9"/>
<rect x="1156.7" y="255.1" width="2.2" height="13.9" fill="#5ba19b"/>
<path d="M1157.00 269.0V255.4H1158.60V269.0" fill="none" stroke="#868686" stroke-width="0.7" stroke-opacity="0.9"/>
<rect x="1158.9" y="264.2" width="1.6" height="4.8" fill="#5ba19b"/>
<path d="M1159.20 269.0V264.5H1160.20V269.0" fill="none" stroke="#868686" stroke-width="0.7" stroke-opacity="0.9"/>
<rect x="1160.5" y="253.1" width="2.3" height="15.9" fill="#5ba19b"/>
<path d="M1160.80 269.0V253.4H1162.50V269.0" fill="none" stroke="#868686" stroke-width="0.7" stroke-opacity="0.9"/>
<rect x="1167.2" y="224.1" width="2.3" height="44.9" fill="#5ba19b"/>
<path d="M1167.50 269.0V224.4H1169.20V269.0" fill="none" stroke="#868686" stroke-width="0.7" stroke-opacity="0.9"/>
<rect x="1169.5" y="162.2" width="2.1" height="106.8" fill="#5ba19b"/>
<path d="M1169.80 269.0V162.5H1171.30V269.0" fill="none" stroke="#868686" stroke-width="0.7" stroke-opacity="0.9"/>
<rect x="1171.6" y="215.4" width="2.1" height="53.6" fill="#5ba19b"/>
<path d="M1171.90 269.0V215.7H1173.40V269.0" fill="none" stroke="#868686" stroke-width="0.7" stroke-opacity="0.9"/>
<rect x="1173.7" y="197.0" width="2.3" height="72.0" fill="#5ba19b"/>
<path d="M1174.00 269.0V197.3H1175.70V269.0" fill="none" stroke="#868686" stroke-width="0.7" stroke-opacity="0.9"/>
<path d="M1119.5 31V269" stroke="#5ba19b" stroke-width="3" stroke-dasharray="3 3.05"/>
<text transform="translate(927.7 248.3) rotate(-90)" font-family="Liberation Sans, sans-serif" font-size="11" fill="#222">131K</text>
<text transform="translate(993.3 225.6) rotate(-90)" font-family="Liberation Sans, sans-serif" font-size="11" fill="#222">314K</text>
<text transform="translate(1069.3 244.8) rotate(-90)" font-family="Liberation Sans, sans-serif" font-size="11" fill="#222">159K</text>
<text transform="translate(1084.9 264.7) rotate(-90)" font-family="Liberation Sans, sans-serif" font-size="10" fill="#222">5K</text>
<text transform="translate(1100.3 247.9) rotate(-90)" font-family="Liberation Sans, sans-serif" font-size="11" fill="#222">137K</text>
<text transform="translate(1115.3 157.3) rotate(-90)" font-family="Liberation Sans, sans-serif" font-size="11" fill="#222">841K</text>
<text transform="translate(1128.9 100.2) rotate(-90)" font-family="Liberation Sans, sans-serif" font-size="11" fill="#222">1,604K</text>
<text transform="translate(1158.6 246.9) rotate(-90)" font-family="Liberation Sans, sans-serif" font-size="11" fill="#222">151K</text>
<text transform="translate(1174.6 158.5) rotate(-90)" font-family="Liberation Sans, sans-serif" font-size="11" fill="#222">827K</text>
<text transform="translate(922.8 310.2) rotate(-90)" font-family="Liberation Sans, sans-serif" font-size="11" fill="#222">Jun 22</text>
<text transform="translate(950.2 310.2) rotate(-90)" font-family="Liberation Sans, sans-serif" font-size="11" fill="#222">Jul 06</text>
<text transform="translate(980.5 310.2) rotate(-90)" font-family="Liberation Sans, sans-serif" font-size="11" fill="#222">Jul 20</text>
<text transform="translate(1011.0 310.2) rotate(-90)" font-family="Liberation Sans, sans-serif" font-size="11" fill="#222">Aug 03</text>
<text transform="translate(1041.4 310.2) rotate(-90)" font-family="Liberation Sans, sans-serif" font-size="11" fill="#222">Aug 17</text>
<text transform="translate(1073.7 310.2) rotate(-90)" font-family="Liberation Sans, sans-serif" font-size="11" fill="#222">Aug 31</text>
<text transform="translate(1103.4 310.2) rotate(-90)" font-family="Liberation Sans, sans-serif" font-size="11" fill="#222">Sep 14</text>
<text transform="translate(1134.0 310.2) rotate(-90)" font-family="Liberation Sans, sans-serif" font-size="11" fill="#222">Sep 28</text>
<text transform="translate(1163.7 310.2) rotate(-90)" font-family="Liberation Sans, sans-serif" font-size="11" fill="#222">Oct 12</text>
</svg>
<div class="t " style="left:1044.5px;width:0;display:flex;justify-content:center;top:33.8px;font-size:11.5px;letter-spacing:-0.2px;color:#222;background:#fff;padding:0 1px;"><span>Today=September 24, 2027</span></div>
<div class="t m" style="left:1252.0px;width:0;display:flex;justify-content:center;top:10.5px;font-size:12px;letter-spacing:-0.1px;"><span>Aging</span></div>
<div class="abs" style="left:1193px;top:26px;width:125px;height:20px;box-sizing:border-box;border:1px solid #b0b0b0;background:#fff"></div>
<div class="t " style="left:1197.3px;top:31.2px;font-size:11.5px;">(All)</div>
<div class="abs" style="left:1297.7px;top:34px;width:0;height:0;border-left:3.5px solid transparent;border-right:3.5px solid transparent;border-top:4px solid #222"></div>
<div class="t m" style="left:1252.0px;width:0;display:flex;justify-content:center;top:58.5px;font-size:12px;letter-spacing:-0.1px;"><span>Branch</span></div>
<div class="abs" style="left:1194px;top:74px;width:125px;height:20px;box-sizing:border-box;border:1px solid #b0b0b0;background:#fff"></div>
<div class="t " style="left:1198.3px;top:79.2px;font-size:11.5px;">(All)</div>
<div class="abs" style="left:1297.7px;top:82px;width:0;height:0;border-left:3.5px solid transparent;border-right:3.5px solid transparent;border-top:4px solid #222"></div>
<div class="t m" style="left:1252.0px;width:0;display:flex;justify-content:center;top:107.0px;font-size:12px;letter-spacing:-0.1px;"><span>Cust ID Name</span></div>
<div class="abs" style="left:1193px;top:123px;width:125px;height:19px;box-sizing:border-box;border:1px solid #b0b0b0;background:#fff"></div>
<div class="abs" style="left:1195px;top:151.2px;width:14px;height:14px;background:#5ba19b"></div>
<div class="t " style="left:1214.0px;top:153.9px;font-size:11.5px;">On Time</div>
<div class="abs" style="left:1195px;top:171.3px;width:14px;height:14px;background:#f0c23b"></div>
<div class="t " style="left:1214.0px;top:174.0px;font-size:11.5px;">01-14 Days</div>
<div class="abs" style="left:1195px;top:191.3px;width:14px;height:14px;background:#ff8c28"></div>
<div class="t " style="left:1214.0px;top:194.1px;font-size:11.5px;">15-30 Days</div>
<div class="abs" style="left:1195px;top:211.4px;width:14px;height:14px;background:#d21a1a"></div>
<div class="t " style="left:1214.0px;top:214.2px;font-size:11.5px;">31-60 Days</div>
<div class="abs" style="left:1195px;top:231.5px;width:14px;height:14px;background:#9b1a1a"></div>
<div class="t " style="left:1214.0px;top:234.2px;font-size:11.5px;">61-90 Days</div>
<div class="abs" style="left:1195px;top:251.5px;width:14px;height:14px;background:#6e2528"></div>
<div class="t " style="left:1214.0px;top:254.3px;font-size:11.5px;">91+ Days</div>
<div class="p" style="left:2px;top:328px;width:496px;height:317px"></div>
<div class="t m" style="left:9.5px;top:335.2px;font-size:12.5px;letter-spacing:-0.1px;">Debt Risk</div>
<div class="t m" style="left:77.0px;top:335.2px;font-size:12.5px;letter-spacing:-0.1px;">Customer</div>
<svg style="left:260px;top:334px" width="12" height="12"><path d="M0.5 1.5H10.5M0.5 5.5H6.5M0.5 9.5H3.2" stroke="#666" stroke-width="2" fill="none"/></svg>
<div class="ln" style="left:3px;top:349px;width:494px;height:1px;background:#d0d0d0"></div>
<div class="abs" style="left:3px;top:350px;width:494px;height:294px;overflow:hidden">
<div class="t " style="left:74.0px;top:5.2px;font-size:11.5px;"><span class="id">TOYSTAR</span>&nbsp;&nbsp;<span style="letter-spacing:-0.05px;margin-left:1.5px">Star America Toys</span></div>
<div class="abs" style="left:285.0px;top:2.2px;width:34.5px;height:15px;background:#9b1a1a"></div>
<div class="abs" style="left:319.5px;top:2.2px;width:23.0px;height:15px;background:#d21a1a"></div>
<div class="abs" style="left:342.5px;top:2.2px;width:32.0px;height:15px;background:#f0c23b"></div>
<div class="abs" style="left:374.5px;top:2.2px;width:36.5px;height:15px;background:#5ba19b"></div>
<div class="t " style="left:417.0px;top:5.2px;font-size:11.5px;">1,754K</div>
<div class="g" style="left:68px;top:19.0px;width:407px;height:20px"></div>
<div class="t " style="left:74.0px;top:25.2px;font-size:11.5px;"><span class="id">WIDGETCC</span>&nbsp;&nbsp;<span style="letter-spacing:-0.05px;margin-left:1.5px">Widget Credit Card</span></div>
<div class="abs" style="left:285.0px;top:22.2px;width:23.5px;height:15px;background:#6e2528"></div>
<div class="abs" style="left:308.5px;top:22.2px;width:5.5px;height:15px;background:#5ba19b"></div>
<div class="t " style="left:320.0px;top:25.2px;font-size:11.5px;">646K</div>
<div class="t " style="left:74.0px;top:45.2px;font-size:11.5px;"><span class="id">MICROCHIP</span>&nbsp;&nbsp;<span style="letter-spacing:-0.05px;margin-left:1.5px">Microchip Restaurant</span></div>
<div class="abs" style="left:285.0px;top:42.2px;width:67.0px;height:15px;background:#5ba19b"></div>
<div class="t " style="left:358.0px;top:45.2px;font-size:11.5px;">940K</div>
<div class="g" style="left:68px;top:58.9px;width:407px;height:20px"></div>
<div class="t " style="left:74.0px;top:65.2px;font-size:11.5px;"><span class="id">ARTCAGES</span>&nbsp;&nbsp;<span style="letter-spacing:-0.05px;margin-left:1.5px">Artcages</span></div>
<div class="abs" style="left:285.0px;top:62.1px;width:56.0px;height:15px;background:#5ba19b"></div>
<div class="t " style="left:347.0px;top:65.2px;font-size:11.5px;">792K</div>
<div class="t " style="left:74.0px;top:85.1px;font-size:11.5px;"><span class="id">WRIGHTCORN</span>&nbsp;&nbsp;<span style="letter-spacing:-0.05px;margin-left:1.5px">Wright Corner</span></div>
<div class="abs" style="left:285.0px;top:82.1px;width:49.0px;height:15px;background:#5ba19b"></div>
<div class="t " style="left:340.0px;top:85.1px;font-size:11.5px;">690K</div>
<div class="g" style="left:68px;top:98.8px;width:407px;height:20px"></div>
<div class="t " style="left:74.0px;top:105.1px;font-size:11.5px;"><span class="id">SNOSHORT</span>&nbsp;&nbsp;<span style="letter-spacing:-0.05px;margin-left:1.5px">Shortstop Sports</span></div>
<div class="abs" style="left:285.0px;top:102.1px;width:13.0px;height:15px;background:#d21a1a"></div>
<div class="abs" style="left:298.0px;top:102.1px;width:11.0px;height:15px;background:#ff8c28"></div>
<div class="abs" style="left:309.0px;top:102.1px;width:14.5px;height:15px;background:#f0c23b"></div>
<div class="t " style="left:329.5px;top:105.1px;font-size:11.5px;">558K</div>
<div class="t " style="left:74.0px;top:125.1px;font-size:11.5px;"><span class="id">ELEVATION</span>&nbsp;&nbsp;<span style="letter-spacing:-0.05px;margin-left:1.5px">Elevation Computers</span></div>
<div class="abs" style="left:285.0px;top:122.1px;width:36.0px;height:15px;background:#f0c23b"></div>
<div class="t " style="left:327.0px;top:125.1px;font-size:11.5px;">509K</div>
<div class="g" style="left:68px;top:138.8px;width:407px;height:20px"></div>
<div class="t " style="left:74.0px;top:145.0px;font-size:11.5px;"><span class="id">FDIAGRI</span>&nbsp;&nbsp;<span style="letter-spacing:-0.05px;margin-left:1.5px">Agrilink Food</span></div>
<div class="abs" style="left:285.0px;top:142.1px;width:32.0px;height:15px;background:#5ba19b"></div>
<div class="t " style="left:323.0px;top:145.0px;font-size:11.5px;">814K</div>
<div class="t " style="left:74.0px;top:165.0px;font-size:11.5px;"><span class="id">TOYONEILL</span>&nbsp;&nbsp;<span style="letter-spacing:-0.05px;margin-left:1.5px">O’Neill’s Trading</span></div>
<div class="abs" style="left:285.0px;top:162.0px;width:20.5px;height:15px;background:#f0c23b"></div>
<div class="abs" style="left:305.5px;top:162.0px;width:9.5px;height:15px;background:#5ba19b"></div>
<div class="t " style="left:321.0px;top:165.0px;font-size:11.5px;">431K</div>
<div class="g" style="left:68px;top:178.7px;width:407px;height:20px"></div>
<div class="t " style="left:74.0px;top:185.0px;font-size:11.5px;"><span class="id">CARIBBEAN</span>&nbsp;&nbsp;<span style="letter-spacing:-0.05px;margin-left:1.5px">Caribbean Secretary Online</span></div>
<div class="abs" style="left:285.0px;top:182.0px;width:30.0px;height:15px;background:#5ba19b"></div>
<div class="t " style="left:321.0px;top:185.0px;font-size:11.5px;">431K</div>
<div class="t " style="left:74.0px;top:204.9px;font-size:11.5px;"><span class="id">PRECISION</span>&nbsp;&nbsp;<span style="letter-spacing:-0.05px;margin-left:1.5px">Precision Photos</span></div>
<div class="abs" style="left:285.0px;top:202.0px;width:29.0px;height:15px;background:#5ba19b"></div>
<div class="t " style="left:320.0px;top:204.9px;font-size:11.5px;">419K</div>
<div class="g" style="left:68px;top:218.7px;width:407px;height:20px"></div>
<div class="t " style="left:74.0px;top:224.9px;font-size:11.5px;"><span class="id">WESTINGALL</span>&nbsp;&nbsp;<span style="letter-spacing:-0.05px;margin-left:1.5px">Westin Galleria Houston</span></div>
<div class="abs" style="left:285.0px;top:222.0px;width:28.5px;height:15px;background:#5ba19b"></div>
<div class="t " style="left:319.5px;top:224.9px;font-size:11.5px;">412K</div>
<div class="t " style="left:74.0px;top:244.9px;font-size:11.5px;"><span class="id">INDSACRAME</span>&nbsp;&nbsp;<span style="letter-spacing:-0.05px;margin-left:1.5px">Sacramento Industrial S..</span></div>
<div class="abs" style="left:285.0px;top:242.0px;width:3.5px;height:15px;background:#f0c23b"></div>
<div class="abs" style="left:288.5px;top:242.0px;width:7.0px;height:15px;background:#5ba19b"></div>
<div class="t " style="left:301.5px;top:244.9px;font-size:11.5px;">171K</div>
<div class="g" style="left:68px;top:258.6px;width:407px;height:20px"></div>
<div class="t " style="left:74.0px;top:264.9px;font-size:11.5px;"><span class="id">FDIQVIK</span>&nbsp;&nbsp;<span style="letter-spacing:-0.05px;margin-left:1.5px">Qvik Process GmbH</span></div>
<div class="abs" style="left:285.0px;top:261.9px;width:8.7px;height:15px;background:#5ba19b"></div>
<div class="t " style="left:299.7px;top:264.9px;font-size:11.5px;">138K</div>
<div class="t " style="left:74.0px;top:284.8px;font-size:11.5px;"><span class="id">FDIACME</span>&nbsp;&nbsp;<span style="letter-spacing:-0.05px;margin-left:1.5px">Acme Food Distribution</span></div>
<div class="abs" style="left:285.0px;top:281.9px;width:9.0px;height:15px;background:#5ba19b"></div>
<div class="t " style="left:300.0px;top:284.8px;font-size:11.5px;">135K</div>
<div class="t m" style="left:6.5px;top:5.2px;font-size:11.5px;">High Risk</div>
<div class="t m" style="left:6.5px;top:45.2px;font-size:11.5px;">Normal</div>
<div class="ln" style="left:0;top:39px;width:475px;height:1px;background:#d0d0d0"></div>
<div class="ln" style="left:284px;top:0;width:1px;height:294px;background:#d8d8d8"></div>
<div class="abs" style="left:476px;top:0;width:18px;height:294px;background:#f6f6f6"></div>
<div class="abs" style="left:476.5px;top:0;width:16.5px;height:100px;background:#e3e3e3"></div>
</div>
<div class="p" style="left:502px;top:328px;width:806px;height:317px"></div>
<div class="t " style="left:507.0px;top:335.5px;font-size:16px;font-weight:bold;letter-spacing:-0.1px;color:#222;">Aging Details</div>
<div class="t " style="left:628.5px;top:338.8px;font-size:11.5px;letter-spacing:0;">Hover over Customer, click ‘-’ to collapse.</div>
<div class="abs" style="left:503px;top:358px;width:787px;height:269px;overflow:hidden">
<div class="g" style="left:0;top:40px;width:787px;height:40px"></div>
<div class="t" style="left:6.5px;top:44.0px;font-size:11.5px;line-height:15px;white-space:normal;width:170px;letter-spacing:-0.1px"><span class="id">AACUSTOMER</span>&nbsp;&nbsp;&nbsp;Alta Ace</div>
<div class="t " style="left:174.5px;top:45.8px;font-size:11.5px;">Total</div>
<div class="t " style="left:600.3px;width:0;display:flex;justify-content:flex-end;top:45.8px;font-size:11.5px;"><span>6,671</span></div>
<div class="t " style="left:174.5px;top:65.8px;font-size:11.5px;">10/5/2027</div>
<div class="t " style="left:246.5px;top:65.8px;font-size:11.5px;">AR013186</div>
<div class="t " style="left:318.5px;top:65.8px;font-size:11.5px;">9/10/2027</div>
<div class="t " style="left:600.3px;width:0;display:flex;justify-content:flex-end;top:65.8px;font-size:11.5px;"><span>6,671</span></div>
<div class="t" style="left:6.5px;top:84.0px;font-size:11.5px;line-height:15px;white-space:normal;width:170px;letter-spacing:-0.1px"><span class="id">ABARTENDE</span>&nbsp;&nbsp;&nbsp;USA Bartending<br>School</div>
<div class="t " style="left:174.5px;top:85.8px;font-size:11.5px;">Total</div>
<div class="t " style="left:600.3px;width:0;display:flex;justify-content:flex-end;top:85.8px;font-size:11.5px;"><span>128,502</span></div>
<div class="t " style="left:174.5px;top:105.8px;font-size:11.5px;">10/2/2027</div>
<div class="t " style="left:246.5px;top:105.8px;font-size:11.5px;">AR013165</div>
<div class="t " style="left:318.5px;top:105.8px;font-size:11.5px;">9/7/2027</div>
<div class="t " style="left:600.3px;width:0;display:flex;justify-content:flex-end;top:105.8px;font-size:11.5px;"><span>48,502</span></div>
<div class="t " style="left:174.5px;top:125.8px;font-size:11.5px;">10/19/2027</div>
<div class="t " style="left:246.5px;top:125.8px;font-size:11.5px;">AR013192</div>
<div class="t " style="left:318.5px;top:125.8px;font-size:11.5px;">9/24/2027</div>
<div class="t " style="left:600.3px;width:0;display:flex;justify-content:flex-end;top:125.8px;font-size:11.5px;"><span>80,000</span></div>
<div class="g" style="left:0;top:140px;width:787px;height:60px"></div>
<div class="t" style="left:6.5px;top:144.0px;font-size:11.5px;line-height:15px;white-space:normal;width:170px;letter-spacing:-0.1px"><span class="id">ABCVENTURE</span>&nbsp;&nbsp;&nbsp;ABC Capital<br>Ventures</div>
<div class="t " style="left:174.5px;top:145.8px;font-size:11.5px;">Total</div>
<div class="t " style="left:600.3px;width:0;display:flex;justify-content:flex-end;top:145.8px;font-size:11.5px;"><span>104,276</span></div>
<div class="t " style="left:174.5px;top:165.8px;font-size:11.5px;">10/17/2027</div>
<div class="t " style="left:246.5px;top:165.8px;font-size:11.5px;">AR013194</div>
<div class="t " style="left:318.5px;top:165.8px;font-size:11.5px;">9/22/2027</div>
<div class="t " style="left:600.3px;width:0;display:flex;justify-content:flex-end;top:165.8px;font-size:11.5px;"><span>97,276</span></div>
<div class="t " style="left:174.5px;top:185.8px;font-size:11.5px;">10/19/2027</div>
<div class="t " style="left:246.5px;top:185.8px;font-size:11.5px;">AR013113</div>
<div class="t " style="left:318.5px;top:185.8px;font-size:11.5px;">9/24/2027</div>
<div class="t " style="left:600.3px;width:0;display:flex;justify-content:flex-end;top:185.8px;font-size:11.5px;"><span>7,000</span></div>
<div class="t" style="left:6.5px;top:204.0px;font-size:11.5px;line-height:15px;white-space:normal;width:170px;letter-spacing:-0.1px"><span class="id">ALPHABETLD</span>&nbsp;&nbsp;&nbsp;Alphabetland<br>School Center</div>
<div class="t " style="left:174.5px;top:205.8px;font-size:11.5px;">Total</div>
<div class="t " style="left:600.3px;width:0;display:flex;justify-content:flex-end;top:205.8px;font-size:11.5px;"><span>2,800</span></div>
<div class="t " style="left:174.5px;top:225.8px;font-size:11.5px;">10/19/2027</div>
<div class="t " style="left:246.5px;top:225.8px;font-size:11.5px;">AR013111</div>
<div class="t " style="left:318.5px;top:225.8px;font-size:11.5px;">9/24/2027</div>
<div class="t " style="left:600.3px;width:0;display:flex;justify-content:flex-end;top:225.8px;font-size:11.5px;"><span>2,800</span></div>
<div class="g" style="left:0;top:240px;width:787px;height:40px"></div>
<div class="t" style="left:6.5px;top:244.0px;font-size:11.5px;line-height:15px;white-space:normal;width:170px;letter-spacing:-0.1px"><span class="id">ANTUNSWEST</span>&nbsp;&nbsp;&nbsp;Antun’s of<br>Westchester</div>
<div class="t " style="left:174.5px;top:245.8px;font-size:11.5px;">Total</div>
<div class="t " style="left:600.3px;width:0;display:flex;justify-content:flex-end;top:245.8px;font-size:11.5px;"><span>7,000</span></div>
<div class="t " style="left:174.5px;top:265.8px;font-size:11.5px;">10/19/2027</div>
<div class="t " style="left:246.5px;top:265.8px;font-size:11.5px;">AR013114</div>
<div class="t " style="left:318.5px;top:265.8px;font-size:11.5px;">9/24/2027</div>
<div class="t " style="left:600.3px;width:0;display:flex;justify-content:flex-end;top:265.8px;font-size:11.5px;"><span>7,000</span></div>
<div class="t " style="left:6.5px;top:6.6px;font-size:11.5px;color:#15153a;-webkit-text-stroke:0.4px #15153a;letter-spacing:-0.2px;">Customer</div>
<div class="t " style="left:174.5px;top:6.6px;font-size:11.5px;color:#15153a;-webkit-text-stroke:0.4px #15153a;letter-spacing:-0.2px;">Due Date</div>
<div class="t " style="left:246.5px;top:6.6px;font-size:11.5px;color:#15153a;-webkit-text-stroke:0.4px #15153a;letter-spacing:-0.2px;">Doc No</div>
<div class="t " style="left:318.5px;top:6.6px;font-size:11.5px;color:#15153a;-webkit-text-stroke:0.4px #15153a;letter-spacing:-0.2px;">Doc Date</div>
<div class="t " style="left:418.0px;width:0;display:flex;justify-content:center;top:8.2px;font-size:11.5px;"><span>31-60 Days</span></div>
<div class="t " style="left:493.0px;width:0;display:flex;justify-content:center;top:8.2px;font-size:11.5px;"><span>61-90 Days</span></div>
<div class="t " style="left:568.0px;width:0;display:flex;justify-content:center;top:8.2px;font-size:11.5px;"><span>On Time</span></div>
<div class="t " style="left:643.0px;width:0;display:flex;justify-content:center;top:8.2px;font-size:11.5px;"><span>01-14 Days</span></div>
<div class="t " style="left:718.0px;width:0;display:flex;justify-content:center;top:8.2px;font-size:11.5px;"><span>15-30 Days</span></div>
<div class="t " style="left:793.0px;width:0;display:flex;justify-content:center;top:8.2px;font-size:11.5px;"><span>91+ Days</span></div>
<div class="t " style="left:6.5px;top:25.8px;font-size:11.5px;">Grand Total</div>
<div class="t " style="left:450.8px;width:0;display:flex;justify-content:flex-end;top:24.0px;font-size:13px;letter-spacing:-0.05px;"><span>501,800</span></div>
<div class="t " style="left:525.8px;width:0;display:flex;justify-content:flex-end;top:24.0px;font-size:13px;letter-spacing:-0.05px;"><span>498,009</span></div>
<div class="t " style="left:600.8px;width:0;display:flex;justify-content:flex-end;top:24.0px;font-size:13px;letter-spacing:-0.05px;"><span>6,288,300</span></div>
<div class="t " style="left:675.8px;width:0;display:flex;justify-content:flex-end;top:24.0px;font-size:13px;letter-spacing:-0.05px;"><span>1,719,451</span></div>
<div class="t " style="left:750.8px;width:0;display:flex;justify-content:flex-end;top:24.0px;font-size:13px;letter-spacing:-0.05px;"><span>164,243</span></div>
<div class="t " style="left:825.8px;width:0;display:flex;justify-content:flex-end;top:24.0px;font-size:13px;letter-spacing:-0.05px;"><span>345,176</span></div>
<div class="ln" style="left:380.0px;top:40.0px;width:407.0px;height:1px;background:#8f8f8f"></div>
<div class="ln" style="left:240.0px;top:60.0px;width:1px;height:20.0px;background:#8f8f8f"></div>
<div class="ln" style="left:312.0px;top:60.0px;width:1px;height:20.0px;background:#8f8f8f"></div>
<div class="ln" style="left:168.0px;top:60.0px;width:619.0px;height:1px;background:#8f8f8f"></div>
<div class="ln" style="left:0.0px;top:80.0px;width:787.0px;height:1px;background:#8f8f8f"></div>
<div class="ln" style="left:380.0px;top:80.0px;width:407.0px;height:1px;background:#8f8f8f"></div>
<div class="ln" style="left:240.0px;top:100.0px;width:1px;height:20.0px;background:#8f8f8f"></div>
<div class="ln" style="left:312.0px;top:100.0px;width:1px;height:20.0px;background:#8f8f8f"></div>
<div class="ln" style="left:168.0px;top:100.0px;width:619.0px;height:1px;background:#8f8f8f"></div>
<div class="ln" style="left:240.0px;top:120.0px;width:1px;height:20.0px;background:#8f8f8f"></div>
<div class="ln" style="left:312.0px;top:120.0px;width:1px;height:20.0px;background:#8f8f8f"></div>
<div class="ln" style="left:168.0px;top:120.0px;width:619.0px;height:1px;background:#8f8f8f"></div>
<div class="ln" style="left:0.0px;top:140.0px;width:787.0px;height:1px;background:#8f8f8f"></div>
<div class="ln" style="left:380.0px;top:140.0px;width:407.0px;height:1px;background:#8f8f8f"></div>
<div class="ln" style="left:240.0px;top:160.0px;width:1px;height:20.0px;background:#8f8f8f"></div>
<div class="ln" style="left:312.0px;top:160.0px;width:1px;height:20.0px;background:#8f8f8f"></div>
<div class="ln" style="left:168.0px;top:160.0px;width:619.0px;height:1px;background:#8f8f8f"></div>
<div class="ln" style="left:240.0px;top:180.0px;width:1px;height:20.0px;background:#8f8f8f"></div>
<div class="ln" style="left:312.0px;top:180.0px;width:1px;height:20.0px;background:#8f8f8f"></div>
<div class="ln" style="left:168.0px;top:180.0px;width:619.0px;height:1px;background:#8f8f8f"></div>
<div class="ln" style="left:0.0px;top:200.0px;width:787.0px;height:1px;background:#8f8f8f"></div>
<div class="ln" style="left:380.0px;top:200.0px;width:407.0px;height:1px;background:#8f8f8f"></div>
<div class="ln" style="left:240.0px;top:220.0px;width:1px;height:20.0px;background:#8f8f8f"></div>
<div class="ln" style="left:312.0px;top:220.0px;width:1px;height:20.0px;background:#8f8f8f"></div>
<div class="ln" style="left:168.0px;top:220.0px;width:619.0px;height:1px;background:#8f8f8f"></div>
<div class="ln" style="left:0.0px;top:240.0px;width:787.0px;height:1px;background:#8f8f8f"></div>
<div class="ln" style="left:380.0px;top:240.0px;width:407.0px;height:1px;background:#8f8f8f"></div>
<div class="ln" style="left:240.0px;top:260.0px;width:1px;height:20.0px;background:#8f8f8f"></div>
<div class="ln" style="left:312.0px;top:260.0px;width:1px;height:20.0px;background:#8f8f8f"></div>
<div class="ln" style="left:168.0px;top:260.0px;width:619.0px;height:1px;background:#8f8f8f"></div>
<div class="ln" style="left:0.0px;top:280.0px;width:787.0px;height:1px;background:#8f8f8f"></div>
<div class="ln" style="left:0.0px;top:0.0px;width:787.0px;height:1px;background:#8f8f8f"></div>
<div class="ln" style="left:0.0px;top:19.0px;width:380.0px;height:1px;background:#b5b5b5"></div>
<div class="ln" style="left:0.0px;top:20.0px;width:787.0px;height:1px;background:#8f8f8f"></div>
<div class="ln" style="left:0.0px;top:40.0px;width:787.0px;height:1px;background:#8f8f8f"></div>
<div class="ln" style="left:168.0px;top:0.0px;width:1px;height:20.0px;background:#8f8f8f"></div>
<div class="ln" style="left:240.0px;top:0.0px;width:1px;height:20.0px;background:#8f8f8f"></div>
<div class="ln" style="left:312.0px;top:0.0px;width:1px;height:20.0px;background:#8f8f8f"></div>
<div class="ln" style="left:168.0px;top:40.0px;width:1px;height:229.0px;background:#8f8f8f"></div>
<div class="ln" style="left:379.0px;top:0.0px;width:1px;height:269.0px;background:#c4c4c4"></div>
<div class="ln" style="left:380.0px;top:0.0px;width:1px;height:269.0px;background:#7f7f7f"></div>
<div class="ln" style="left:455.0px;top:0.0px;width:1px;height:269.0px;background:#8f8f8f"></div>
<div class="ln" style="left:530.0px;top:0.0px;width:1px;height:269.0px;background:#8f8f8f"></div>
<div class="ln" style="left:605.0px;top:0.0px;width:1px;height:269.0px;background:#8f8f8f"></div>
<div class="ln" style="left:680.0px;top:0.0px;width:1px;height:269.0px;background:#8f8f8f"></div>
<div class="ln" style="left:755.0px;top:0.0px;width:1px;height:269.0px;background:#8f8f8f"></div>
<div class="ln" style="left:0.0px;top:0.0px;width:1px;height:269.0px;background:#9a9a9a"></div>
</div>
<div class="abs" style="left:1290px;top:378px;width:17px;height:249px;background:#f5f5f5"></div>
<div class="abs" style="left:1290px;top:378px;width:17px;height:23.5px;background:#e0e0e0"></div>
<div class="abs" style="left:883px;top:627px;width:407px;height:17px;background:#f5f5f5"></div>
<div class="abs" style="left:883px;top:627px;width:315px;height:17px;background:#e1e1e1"></div>
<div class="ln" style="left:503px;top:626px;width:380px;height:1px;background:#bdbdbd"></div>
</body></html>
